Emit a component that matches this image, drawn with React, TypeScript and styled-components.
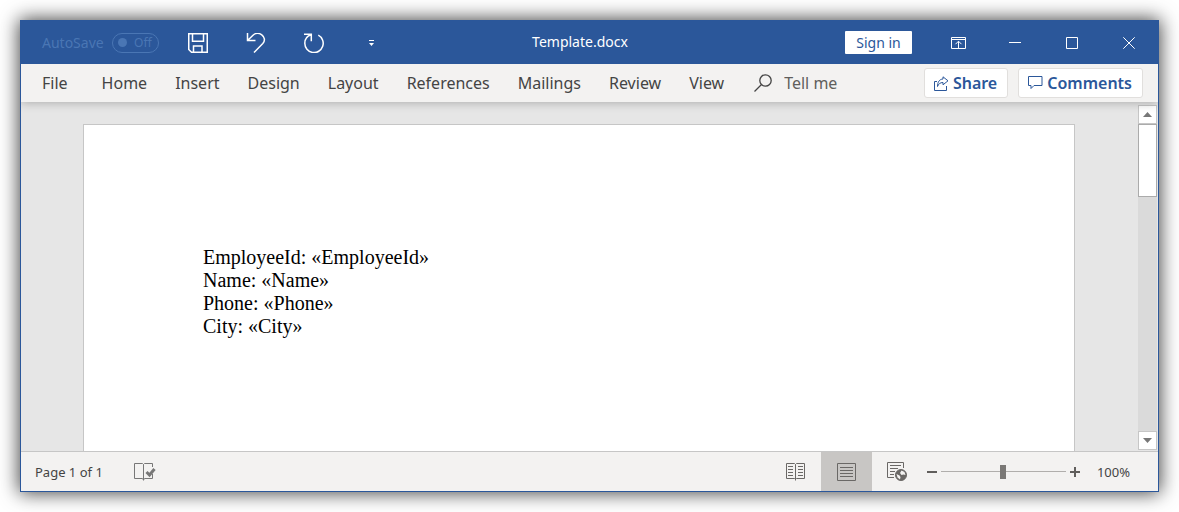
import React from "react";
import styled, { createGlobalStyle, css } from "styled-components";

const ui = `"Noto Sans", "Open Sans", sans-serif`;
const blue = "#2b579a";

const Global = createGlobalStyle`
  *, *::before, *::after { box-sizing: border-box; }
  body { margin: 0; background: #fff; font-family: ${ui}; }
  button, input { font: inherit; color: inherit; margin: 0; padding: 0; border: 0; background: none; }
  svg { display: block; flex: none; fill: none; stroke: currentColor; }
`;

const Desktop = styled.div`
  display: flex;
  min-height: 100vh;
  padding: 20px;
`;

const Window = styled.div`
  flex: 1;
  min-width: 0;
  display: flex;
  flex-direction: column;
  border: 1px solid ${blue};
  background: #e6e6e6;
  box-shadow: 0 0 18px 1px rgba(0, 0, 0, 0.75);
`;

const TitleBar = styled.header`
  display: grid;
  grid-template-columns: 1fr auto 1fr;
  align-items: center;
  height: 43px;
  padding-right: 19px;
  background: ${blue};
  color: #fff;
`;

const QuickAccess = styled.div`
  display: flex;
  align-items: center;
  gap: 38px;
  padding-left: 21px;
`;

const AutoSave = styled.label`
  display: flex;
  align-items: center;
  gap: 8px;
  margin-right: -9px;
  color: #4a76b4;
  font-size: 14px;
  line-height: 18px;
`;

const Toggle = styled.span`
  display: flex;
  align-items: center;
  justify-content: space-between;
  width: 47px;
  height: 20px;
  padding: 0 6px 0 5px;
  border: 1px solid #4a76b4;
  border-radius: 10px;
  font-size: 12px;
`;

const ToggleInput = styled.input`
  appearance: none;
  width: 9px;
  height: 9px;
  border-radius: 50%;
  background: #4a76b4;
`;

const IconButton = styled.button`
  display: grid;
  place-items: center;
  width: 20px;
  height: 24px;
`;

const DocTitle = styled.h1`
  margin: 0;
  padding-bottom: 2px;
  font-size: 14px;
  font-weight: 400;
`;

const WindowControls = styled.div`
  display: flex;
  align-items: center;
  justify-content: flex-end;
  gap: 37px;
`;

const SignIn = styled.button`
  width: 67px;
  height: 23px;
  margin-right: -1px;
  border-radius: 1px;
  background: #fff;
  color: ${blue};
  font-size: 14px;
`;

const Ribbon = styled.div`
  position: relative;
  display: flex;
  align-items: center;
  height: 38px;
  padding: 0 15px 0 7px;
  background: #f3f2f1;
  color: #444;
  font-size: 16px;
  box-shadow: 0 0 10px rgba(0, 0, 0, 0.3);
  clip-path: inset(0 0 -12px 0);
`;

const Tabs = styled.nav`
  display: flex;
`;

const Tab = styled.button<{ $first?: boolean }>`
  padding: 0 14px;
  margin-right: ${(p) => (p.$first ? "6px" : "0")};
`;

const Search = styled.label`
  display: flex;
  align-items: center;
  flex: 1;
  gap: 12px;
  margin-left: 16px;
`;

const SearchInput = styled.input`
  width: 100px;
  &::placeholder { color: #605e5c; opacity: 1; }
`;

const Actions = styled.div`
  display: flex;
  gap: 10px;
`;

const Action = styled.button`
  display: flex;
  align-items: center;
  gap: 4px;
  height: 30px;
  padding: 0 10px 0 9px;
  border: 1px solid #e1dfdd;
  border-radius: 3px;
  background: #fff;
  color: ${blue};
  font-weight: 600;
`;

const Workspace = styled.main`
  flex: 1;
  display: flex;
`;

const Canvas = styled.div`
  flex: 1;
  display: flex;
  padding: 22px 63px 0 62px;
`;

const Sheet = styled.article`
  flex: 1;
  padding: 121px 119px 40px;
  border: 1px solid #c6c6c6;
  border-bottom: 0;
  background: #fff;
  color: #000;
  font: 20px/23px "Liberation Serif", serif;
`;

const Line = styled.p`
  margin: 0;
`;

const ScrollBar = styled.div`
  display: flex;
  flex-direction: column;
  width: 19px;
  margin: 3px 1px 1px 0;
  background: #dadada;
`;

const ScrollArrow = styled.button`
  display: grid;
  place-items: center;
  height: 19px;
  border: 1px solid #c6c6c6;
  background: #fff;
  color: #777;
`;

const Thumb = styled.div`
  height: 73px;
  border: 1px solid #ababab;
  background: #fff;
`;

const Spacer = styled.div`
  flex: 1;
`;

const StatusBar = styled.footer`
  display: flex;
  align-items: center;
  height: 40px;
  padding: 0 28px 0 14px;
  border-top: 1px solid #c6c6c6;
  background: #f3f2f1;
  color: #444;
  font-size: 13px;
`;

const Proofing = styled(IconButton)`
  width: 22px;
  margin-left: 31px;
  color: #777;
`;

const ViewButton = styled.button<{ $active?: boolean }>`
  display: grid;
  place-items: center;
  align-self: stretch;
  width: 51px;
  color: #6a6866;
  ${(p) => p.$active && css`background: #c8c6c4;`}
`;

const Zoom = styled.div`
  display: flex;
  align-items: center;
  gap: 4px;
  margin-left: 4px;
`;

const ZoomButton = styled.button`
  display: grid;
  place-items: center;
  width: 10px;
  height: 20px;
  color: #605e5c;
`;

const ZoomSlider = styled.input`
  appearance: none;
  width: 125px;
  height: 14px;
  background: linear-gradient(#b0aeac, #b0aeac) center / 100% 1px no-repeat;
  &::-webkit-slider-thumb {
    appearance: none;
    width: 6px;
    height: 14px;
    background: #7a7876;
  }
`;

const Percent = styled.output`
  margin-left: 17px;
`;

const tabs = ["File", "Home", "Insert", "Design", "Layout", "References", "Mailings", "Review", "View"];
const fields = ["EmployeeId", "Name", "Phone", "City"];

export default function App() {
  return (
    <Desktop>
      <Global />
      <Window>
        <TitleBar>
          <QuickAccess>
            <AutoSave>
              AutoSave
              <Toggle>
                <ToggleInput type="checkbox" />
                Off
              </Toggle>
            </AutoSave>
            <IconButton aria-label="Save">
              <svg width="20" height="20" viewBox="0 0 20 20" strokeWidth="1.5">
                <path d="M.75.75h18.5v18.5H3.5L.75 16.5zM4.5.75v7.5h11V.75M5.5 19v-6h8.500v6" />
              </svg>
            </IconButton>
            <IconButton aria-label="Undo">
              <svg width="20" height="20" viewBox="0 0 20 20" strokeWidth="1.5">
                <path d="M1.500 0v7.500H9.500M1.800 7.200L7 2.200C9.500 0 13 0 15.800 1.800c3 2.200 3.500 6 1 8.700L8 19.500" />
              </svg>
            </IconButton>
            <IconButton aria-label="Redo">
              <svg width="20" height="20" viewBox="0 0 20 20" strokeWidth="1.5">
                <path d="M0 1.200h7.300v7M6.800 1.800C2.800 3.300.8 6.500.8 10.200a9.200 9.200 0 1 0 13.500-8" />
              </svg>
            </IconButton>
            <IconButton aria-label="Customize Quick Access Toolbar">
              <svg width="5" height="6" viewBox="0 0 5 6">
                <path d="M0 .5h5" />
                <path d="M0 3h5L2.500 6z" fill="currentColor" stroke="none" />
              </svg>
            </IconButton>
          </QuickAccess>
          <DocTitle>Template.docx</DocTitle>
          <WindowControls>
            <SignIn>Sign in</SignIn>
            <IconButton aria-label="Ribbon display options">
              <svg width="15" height="12" viewBox="0 0 15 12">
                <path d="M.5.5h14v11H.5zM.5 2.500h14M7.500 11V4.500M4.500 7.200l3-3 3 3" />
              </svg>
            </IconButton>
            <IconButton aria-label="Minimize">
              <svg width="12" height="12" viewBox="0 0 12 12"><path d="M0 5.500h12" /></svg>
            </IconButton>
            <IconButton aria-label="Maximize">
              <svg width="12" height="12" viewBox="0 0 12 12"><path d="M.5.5h11v11H.5z" /></svg>
            </IconButton>
            <IconButton aria-label="Close">
              <svg width="12" height="12" viewBox="0 0 12 12"><path d="M.3.3l11.400 11.400M11.700.3.3 11.700" /></svg>
            </IconButton>
          </WindowControls>
        </TitleBar>
        <Ribbon>
          <Tabs>
            {tabs.map((t, i) => (
              <Tab key={t} $first={i === 0}>{t}</Tab>
            ))}
          </Tabs>
          <Search>
            <svg width="18" height="18" viewBox="0 0 18 18" strokeWidth="1.300">
              <path d="M.5 17.500l7-7" />
              <circle cx="11.500" cy="6.500" r="5.700" />
            </svg>
            <SearchInput aria-label="Tell me" placeholder="Tell me" />
          </Search>
          <Actions>
            <Action>
              <svg width="15" height="15" viewBox="0 0 15 15">
                <path d="M3 5.500H.5v9h12V10M9 .8l5 4-5 4V6.500C6 6.500 4.500 8 3.500 10.500 3.500 6 5.500 3.200 9 3z" />
              </svg>
              Share
            </Action>
            <Action>
              <svg width="15" height="14" viewBox="0 0 15 14">
                <path d="M.5.5h13.500v9H6l-3 3v-3H.5z" />
              </svg>
              Comments
            </Action>
          </Actions>
        </Ribbon>
        <Workspace>
          <Canvas>
            <Sheet>
              {fields.map((f) => (
                <Line key={f}>{f}: «{f}»</Line>
              ))}
            </Sheet>
          </Canvas>
          <ScrollBar>
            <ScrollArrow aria-label="Scroll up">
              <svg width="9" height="5" viewBox="0 0 9 5"><path d="M0 5h9L4.500 0z" fill="currentColor" stroke="none" /></svg>
            </ScrollArrow>
            <Thumb />
            <Spacer />
            <ScrollArrow aria-label="Scroll down">
              <svg width="9" height="5" viewBox="0 0 9 5"><path d="M0 0h9L4.500 5z" fill="currentColor" stroke="none" /></svg>
            </ScrollArrow>
          </ScrollBar>
        </Workspace>
        <StatusBar>
          <span>Page 1 of 1</span>
          <Proofing aria-label="Proofing">
            <svg width="22" height="18" viewBox="0 0 22 18">
              <path d="M9.500 1.500v16M9.500 1.500l-1-1h-8v15h8l1 1.500 1-1.500h8V11M9.500 1.500l1-1h8V4" />
              <path d="M12.500 9l3 3 5-6" strokeWidth="3" />
            </svg>
          </Proofing>
          <Spacer />
          <ViewButton aria-label="Read mode">
            <svg width="19" height="18" viewBox="0 0 19 18">
              <path d="M9.500 1.500v16M9.500 1.500l-1-1h-8v15h8l1 1 1-1h8V.5h-8zM2 3.500h5M2 6.500h5M2 9.500h5M2 12.500h5M12 3.500h5M12 6.500h5M12 9.500h5M12 12.500h5" />
            </svg>
          </ViewButton>
          <ViewButton $active aria-label="Print layout">
            <svg width="19" height="18" viewBox="0 0 19 18">
              <path d="M.5.5h18v17H.5zM3 4.500h13M3 7.500h13M3 10.500h13M3 13.500h13" />
            </svg>
          </ViewButton>
          <ViewButton aria-label="Web layout">
            <svg width="20" height="19" viewBox="0 0 20 19">
              <path d="M7 15.500H.5V.5h16V6M3 3.500h11M3 6.500h8M3 9.500h5M3 12.500h4" />
              <circle cx="14" cy="13" r="5.500" fill="currentColor" />
              <path d="M14.500 8.500l3 1.500 1 3-2-.5-2 .5-1.500-2zM9.500 12l3 1.500 1 1.500-.5 2.500-2.500-2z" fill="#f3f2f1" stroke="none" />
            </svg>
          </ViewButton>
          <Zoom>
            <ZoomButton aria-label="Zoom out">
              <svg width="10" height="10" viewBox="0 0 10 10" strokeWidth="2"><path d="M0 5h10" /></svg>
            </ZoomButton>
            <ZoomSlider type="range" aria-label="Zoom" min={0} max={200} defaultValue={100} />
            <ZoomButton aria-label="Zoom in">
              <svg width="10" height="10" viewBox="0 0 10 10" strokeWidth="2"><path d="M0 5h10M5 0v10" /></svg>
            </ZoomButton>
          </Zoom>
          <Percent>100%</Percent>
        </StatusBar>
      </Window>
    </Desktop>
  );
}
